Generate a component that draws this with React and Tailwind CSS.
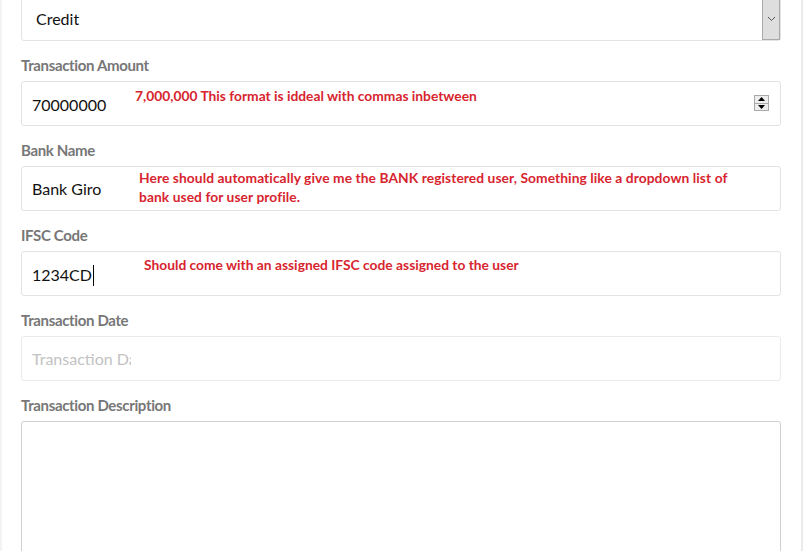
import React from "react";

const font = { fontFamily: "Lato, 'Open Sans', sans-serif" };

function Label({ children }) {
  return (
    <div className="h-[20px] mb-[5px] text-[15px] leading-[18px] font-bold text-[#777] tracking-[-0.35px]">
      {children}
    </div>
  );
}

function Note({ children, className }) {
  return (
    <div className={"absolute leading-[19px] font-bold text-[#d7252f] " + className}>
      {children}
    </div>
  );
}

function Box({ children, className = "" }) {
  return (
    <div className={"relative h-[45px] w-[760px] border border-[#e3e3e3] rounded-[3px] bg-white flex items-center " + className}>
      {children}
    </div>
  );
}

export default function App() {
  return (
    <div style={font} className="w-[803px] h-[551px] overflow-hidden bg-white flex">
      <div className="w-[2px] bg-[#f3f3f3] shrink-0" />
      <div className="flex-1 pl-[19px] mt-[-4px]">
        <div className="mb-[15px]">
          <Box className="border-[#d6d6d6]">
            <span className="pl-[14px] text-[16px] text-[#111]">Credit</span>
            <div className="absolute right-0 top-0 bottom-0 w-[18px] bg-[#dedede] border border-[#a9a9a9] flex items-center justify-center">
              <svg width="9" height="6" viewBox="0 0 9 6">
                <path d="M1 1 L4.5 4.5 L8 1" fill="none" stroke="#555" strokeWidth="1" />
              </svg>
            </div>
          </Box>
        </div>

        <div className="mb-[15px]">
          <Label>Transaction Amount</Label>
          <Box>
            <span className="pl-[10px] pt-[3px] text-[16px] text-[#111]">70000000</span>
            <Note className="left-[113px] top-[4px] text-[13.8px]">7,000,000 This format is iddeal with commas inbetween</Note>
            <div className="absolute right-[11px] top-[13px] w-[15px] h-[16px] border border-[#aaa] bg-[#eee] flex flex-col">
              <div className="flex-1 flex items-center justify-center border-b border-[#aaa]">
                <svg width="7" height="4" viewBox="0 0 7 4"><path d="M0 4 L3.5 0 L7 4 Z" fill="#000" /></svg>
              </div>
              <div className="flex-1 flex items-center justify-center">
                <svg width="7" height="4" viewBox="0 0 7 4"><path d="M0 0 L3.5 4 L7 0 Z" fill="#000" /></svg>
              </div>
            </div>
          </Box>
        </div>

        <div className="mb-[15px]">
          <Label>Bank Name</Label>
          <Box>
            <span className="pl-[10px] text-[16px] text-[#111]">Bank Giro</span>
            <Note className="left-[117px] top-[1px] text-[13.8px] tracking-[0.07px]">
              Here should automatically give me the BANK registered user, Something like a dropdown list of
              <br />
              bank used for user profile.
            </Note>
          </Box>
        </div>

        <div className="mb-[15px]">
          <Label>IFSC Code</Label>
          <Box>
            <span className="pl-[10px] pt-[3px] text-[16px] text-[#111] flex items-center">
              1234CD<span className="inline-block w-[1px] h-[21px] bg-black ml-[1px]" />
            </span>
            <Note className="left-[122px] top-[3px] text-[13.8px]">Should come with an assigned IFSC code assigned to the user</Note>
          </Box>
        </div>

        <div className="mb-[15px]">
          <Label>Transaction Date</Label>
          <Box className="border-[#ebebeb]">
            <span className="ml-[10px] w-[99px] overflow-hidden whitespace-nowrap text-[16px] text-[#c2c2c2]">Transaction Date</span>
          </Box>
        </div>

        <div>
          <Label>Transaction Description</Label>
          <div className="h-[160px] w-[760px] border border-[#d0d0d0] rounded-[3px] bg-white" />
        </div>
      </div>
      <div className="w-[2px] bg-[#ebebeb] shrink-0" />
    </div>
  );
}
